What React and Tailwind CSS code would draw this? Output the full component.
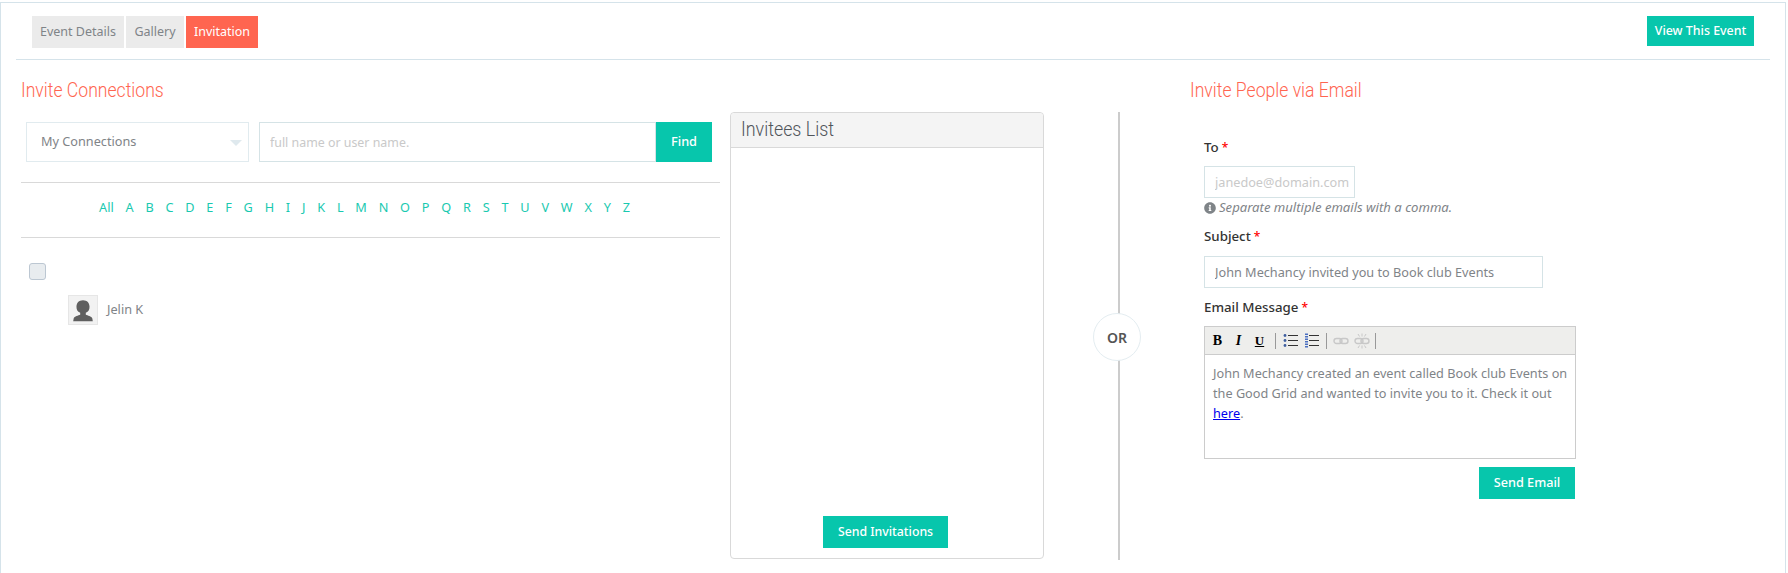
import React from "react";
import { FaInfoCircle } from "react-icons/fa";

const letters = "ABCDEFGHIJKLMNOPQRSTUVWXYZ".split("");

const Req = () => <span className="text-[#ff0000] text-[12px]"> *</span>;

const Avatar = () => (
  <svg width="30" height="30" viewBox="0 0 30 30" className="border border-[#e6e6e6] bg-[#f2f2f2]">
    <path
      d="M15 4.500c-4.500 0-7 3-7 7 0 3 1 5.500 4 6.500v2c-2 1-6 1.200-7 4l-.5 3h21l-.5-3c-1-2.800-5-3-7-4v-2c3-1 4-3.500 4-6.500 0-4-2.500-7-7-7z"
      fill="#5f5f5f"
    />
  </svg>
);

const ListIcon = ({ numbered }) => (
  <svg width="15" height="15" viewBox="0 0 15 15">
    {[2.500, 7.500, 12.500].map((y) => (
      <g key={y}>
        {numbered ? (
          <path d={`M1 ${y - 2}h3v1.500h-3v1h3v1.500h-3z`} fill="#4a6fc0" />
        ) : (
          <circle cx="2" cy={y} r="1.400" fill="#3f5f9f" />
        )}
        <rect x="5" y={y - 0.5} width="10" height="1" fill="#333" />
      </g>
    ))}
  </svg>
);

const LinkIcon = ({ broken }) => (
  <svg width="16" height="16" viewBox="0 0 16 16" fill="none" stroke="#c8c8c8" strokeWidth="1.400">
    <rect x="1" y="5.500" width="8" height="5" rx="2.500" />
    <rect x="7" y="5.500" width="8" height="5" rx="2.500" />
    {broken && (
      <path d="M8 0.500v3M8 12.500v3M4 1l1.500 2.500M12 1l-1.500 2.500M4 15l1.500-2.500M12 15l-1.500-2.500" strokeWidth="1" />
    )}
  </svg>
);

const Slot = ({ children }) => <span className="w-[21px] h-[20px] flex items-center justify-center">{children}</span>;

export default function App() {
  return (
    <div className="w-[1788px] h-[573px] bg-white pt-[2px] pr-[2px] overflow-hidden font-['Noto_Sans',sans-serif] text-[12.7px]">
      <div className="h-full border-t border-x border-[#d5e3ea] px-[15px]">
        {/* Tabs row */}
        <div className="h-[57px] pt-[13px] px-[16px] border-b border-[#d5e3ea] flex justify-between items-start">
          <div className="flex gap-[2px]">
            <button className="h-[32px] w-[92px] bg-[#ebebeb] text-[#7f8488] text-[12.5px]">Event Details</button>
            <button className="h-[32px] w-[58px] bg-[#ebebeb] text-[#7f8488] text-[12.5px]">Gallery</button>
            <button className="h-[32px] w-[72px] bg-[#ff6550] text-white text-[12.5px]">Invitation</button>
          </div>
          <button className="h-[30px] w-[107px] bg-[#07c6ac] text-white font-medium text-[12.4px]">View This Event</button>
        </div>

        <div className="flex items-start">
          {/* Invite connections */}
          <div className="ml-[5px] w-[699px] shrink-0">
            <h2 className="mt-[18px] h-[24px] leading-[24px] text-[20px] font-light text-[#ff6550] font-['Roboto',sans-serif]">
              <span className="inline-block origin-left scale-x-[0.88]">Invite Connections</span>
            </h2>
            <div className="mt-[20px] ml-[5px] flex">
              <div className="relative w-[223px] h-[40px] border border-[#e1ebef] flex items-center pl-[14px] text-[#7f8488]">
                My Connections
                <span className="absolute right-[6px] top-[17px] w-0 h-0 border-x-[6px] border-x-transparent border-t-[6px] border-t-[#dfe9ee]" />
              </div>
              <input
                className="ml-[10px] w-[397px] h-[40px] border border-[#d5e3e6] pl-[10px] outline-none text-[12.4px] placeholder:text-[#c9c9c9]"
                placeholder="full name or user name."
              />
              <button className="w-[56px] h-[40px] bg-[#07c6ac] text-white font-medium">Find</button>
            </div>
            <div className="mt-[20px] h-[56px] pb-[5px] border-y border-[#d9d9d9] flex items-center justify-center gap-[11.8px] pr-[12px] text-[#19c9b0]">
              <a>All</a>
              {letters.map((l) => (
                <a key={l}>{l}</a>
              ))}
            </div>
            <div className="mt-[25px] ml-[8px] w-[17px] h-[17px] rounded-[3px] border border-[#bcc7d2] bg-[#e8ecef]" />
            <div className="mt-[15px] ml-[47px] flex items-center gap-[9px] text-[#7f8488]">
              <Avatar />
              Jelin K
            </div>
          </div>

          {/* Invitees list */}
          <div className="mt-[52px] ml-[10px] w-[314px] h-[447px] shrink-0 rounded-[4px] border border-[#d9d9d9] flex flex-col">
            <div className="h-[35px] bg-[#f4f4f4] border-b border-[#d9d9d9] rounded-t-[4px] pl-[10px] leading-[33px] text-[21px] font-light text-[#50555a] font-['Roboto',sans-serif]">
              <span className="inline-block origin-left scale-x-[0.85]">Invitees List</span>
            </div>
            <div className="flex-1" />
            <button className="self-center mr-[3px] mb-[10px] w-[125px] h-[32px] bg-[#07c6ac] text-white font-medium text-[12.3px]">
              Send Invitations
            </button>
          </div>

          {/* OR separator */}
          <div className="relative mt-[52px] ml-[74px] w-[2px] h-[448px] shrink-0 bg-[#cccccc]">
            <div className="absolute left-[-25px] top-[201px] w-[48px] h-[48px] rounded-full border border-[#e4edf1] bg-white flex items-center justify-center text-[14px] font-semibold text-[#555]">
              OR
            </div>
          </div>

          {/* Invite via email */}
          <div className="ml-[70px] w-[400px] shrink-0">
            <h2 className="mt-[18px] h-[24px] leading-[24px] text-[20px] font-light text-[#ff6550] font-['Roboto',sans-serif]">
              <span className="inline-block origin-left scale-x-[0.88]">Invite People via Email</span>
            </h2>
            <div className="ml-[14px]">
              <label className="block mt-[35px] h-[20px] leading-[20px] text-[13.3px] font-medium text-[#333]">
                To<Req />
              </label>
              <input
                className="block mt-[9px] w-[151px] h-[32px] border border-[#d5e3e6] pl-[10px] outline-none placeholder:text-[#c9c9c9]"
                placeholder="janedoe@domain.com"
              />
              <div className="mt-[1px] h-[18px] flex items-center gap-[3px] italic text-[13.1px] text-[#7f8488]">
                <FaInfoCircle className="text-[#7f8488] text-[12px]" />
                Separate multiple emails with a comma.
              </div>
              <label className="block mt-[9px] h-[20px] leading-[20px] text-[13.3px] font-medium text-[#333]">
                Subject<Req />
              </label>
              <input
                className="block mt-[10px] w-[339px] h-[32px] border border-[#d5e3e6] pl-[10px] outline-none text-[#7f8488]"
                defaultValue="John Mechancy invited you to Book club Events"
              />
              <label className="block mt-[9px] h-[20px] leading-[20px] text-[13.3px] font-medium text-[#333]">
                Email Message<Req />
              </label>
              <div className="mt-[9px] w-[372px] h-[133px] border border-[#cccccc]">
                <div className="h-[28px] bg-[#eeeeec] border-b border-[#cccccc] flex items-center pl-[2px]">
                  <Slot><span className="font-['Liberation_Serif',serif] font-bold text-[14px] text-black">B</span></Slot>
                  <Slot><span className="font-['Liberation_Serif',serif] font-bold italic text-[14px] text-black">I</span></Slot>
                  <Slot><span className="font-['Liberation_Serif',serif] font-bold underline text-[13px] text-black">U</span></Slot>
                  <span className="ml-[5px] mr-[4px] w-px h-[16px] bg-[#999]" />
                  <Slot><ListIcon /></Slot>
                  <Slot><ListIcon numbered /></Slot>
                  <span className="ml-[4px] mr-[3px] w-px h-[16px] bg-[#999]" />
                  <Slot><LinkIcon /></Slot>
                  <Slot><LinkIcon broken /></Slot>
                  <span className="ml-[3px] w-px h-[16px] bg-[#999]" />
                </div>
                <p className="pl-[8px] pr-[2px] pt-[8px] leading-[20px] text-[#7f8488]">
                  John Mechancy created an event called Book club Events on the Good Grid and wanted to invite you to it. Check it out{" "}
                  <a className="text-[#0000ee] underline">here</a>.
                </p>
              </div>
              <div className="w-[371px] flex justify-end mt-[8px]">
                <button className="w-[96px] h-[32px] bg-[#07c6ac] text-white font-medium">Send Email</button>
              </div>
            </div>
          </div>
        </div>
      </div>
    </div>
  );
}
